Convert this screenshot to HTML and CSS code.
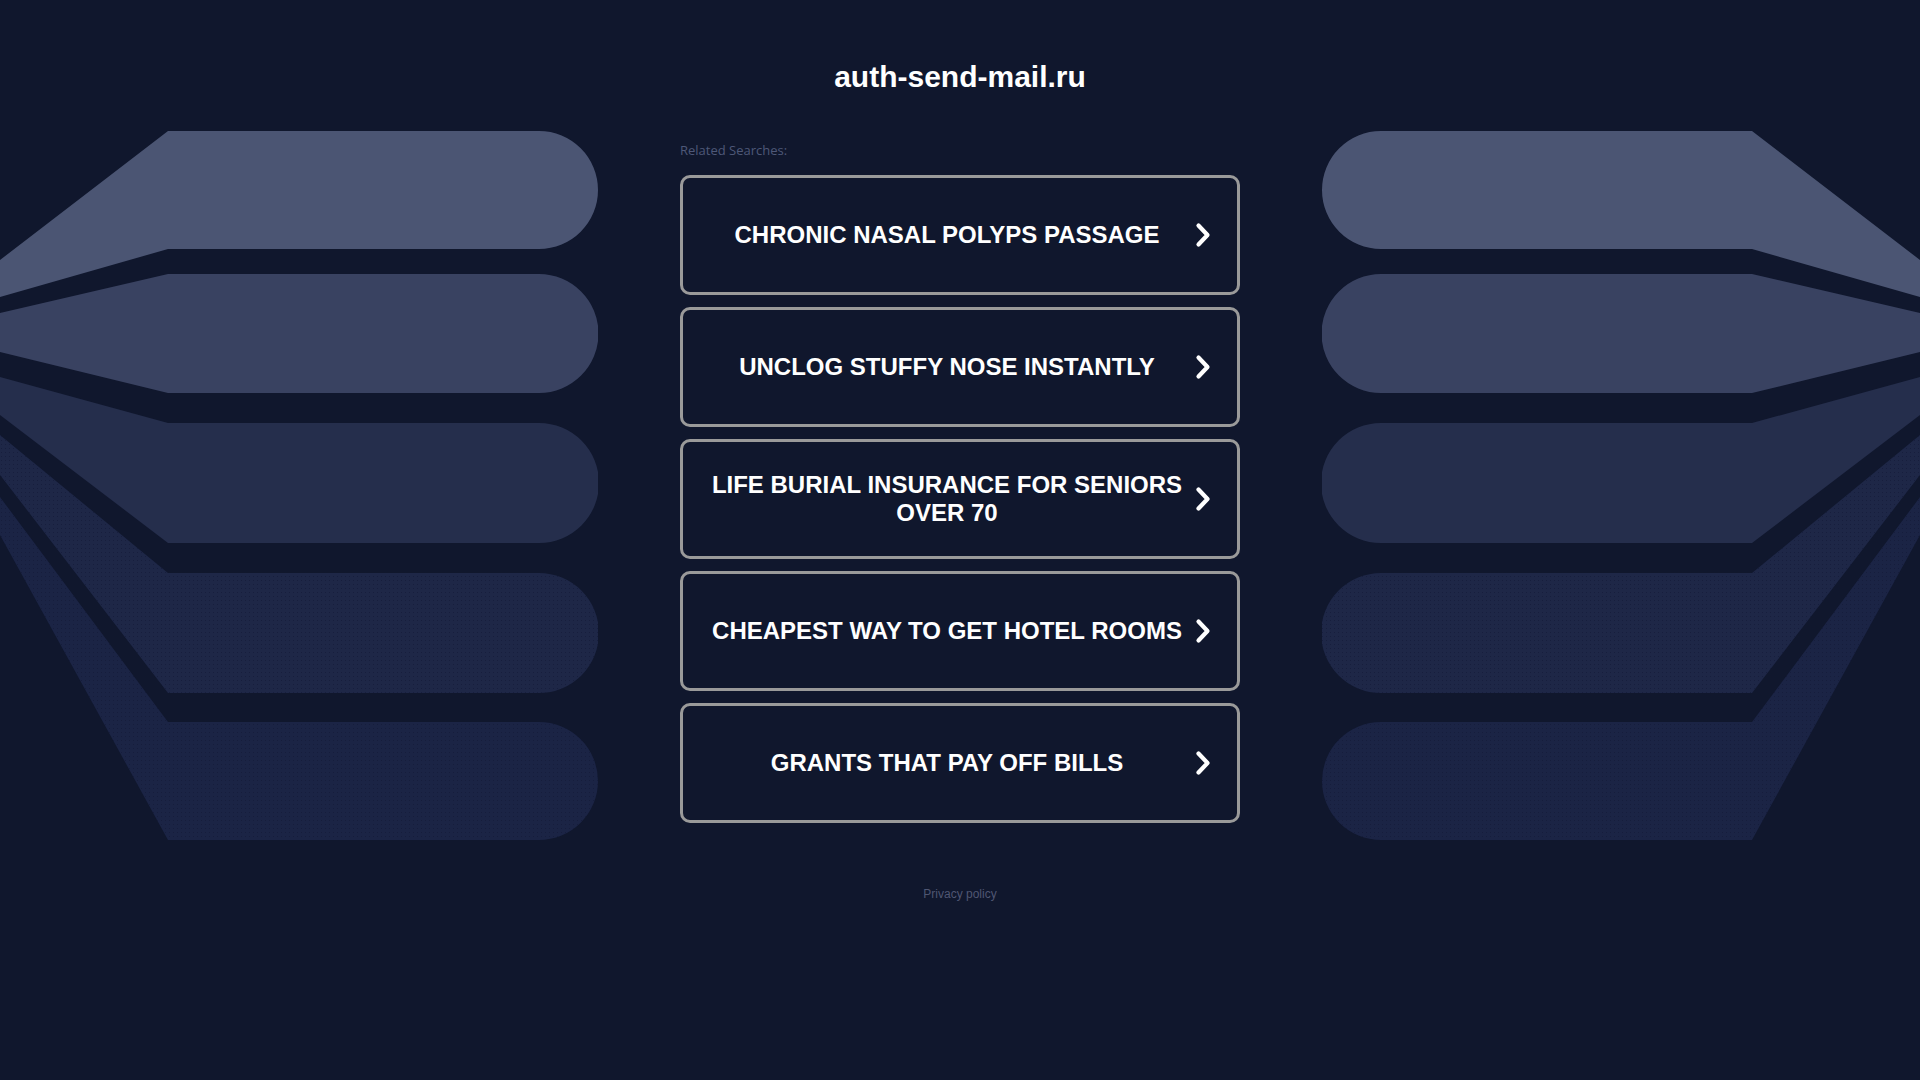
FILE: index.html
```html
<!DOCTYPE html>
<html lang="en">
<head>
<meta charset="utf-8">
<title>auth-send-mail.ru</title>
<link rel="stylesheet" href="styles.css">
</head>
<body>
<header class="header">
  <h1 class="domain">auth-send-mail.ru</h1>
</header>
<main class="stage">
  <svg class="deco" width="598" height="712" viewBox="0 0 598 712" aria-hidden="true">
    <defs>
      <pattern id="dotsL" width="4" height="4" patternUnits="userSpaceOnUse">
        <rect x="1" y="1" width="1" height="1" fill="#0f1530" fill-opacity="0.45"/>
      </pattern>
    </defs>
    <path d="M0,129 L168,0 L539,0 A59,59 0 0 1 539,118 L168,118 L0,166 Z" fill="#4b5573"/>
    <path d="M0,182 L168,143 L539,143 A59.5,59.5 0 0 1 539,262 L168,262 L0,221 Z" fill="#394261"/>
    <path d="M0,246 L168,292 L539,292 A60,60 0 0 1 539,412 L168,412 L0,284 Z" fill="#252e4c"/>
    <path d="M0,304 L168,442 L539,442 A60,60 0 0 1 539,562 L168,562 L0,344 Z" fill="#1e2747"/>
    <path d="M0,304 L168,442 L539,442 A60,60 0 0 1 539,562 L168,562 L0,344 Z" fill="url(#dotsL)"/>
    <path d="M0,366 L168,591 L539,591 A59,59 0 0 1 539,709 L168,709 L0,404 Z" fill="#1b2445"/>
    <path d="M0,366 L168,591 L539,591 A59,59 0 0 1 539,709 L168,709 L0,404 Z" fill="url(#dotsL)"/>
  </svg>

  <section class="center">
    <p class="related">Related Searches:</p>
    <a class="card" href="#"><span class="label">CHRONIC NASAL POLYPS PASSAGE</span><svg class="chev" width="16" height="26" viewBox="0 0 16 26"><polyline points="3.5,3.5 12.5,13 3.5,22.5" fill="none" stroke="#fff" stroke-width="4.2" stroke-linecap="round" stroke-linejoin="round"/></svg></a>
    <a class="card" href="#"><span class="label">UNCLOG STUFFY NOSE INSTANTLY</span><svg class="chev" width="16" height="26" viewBox="0 0 16 26"><polyline points="3.5,3.5 12.5,13 3.5,22.5" fill="none" stroke="#fff" stroke-width="4.2" stroke-linecap="round" stroke-linejoin="round"/></svg></a>
    <a class="card" href="#"><span class="label">LIFE BURIAL INSURANCE FOR SENIORS OVER 70</span><svg class="chev" width="16" height="26" viewBox="0 0 16 26"><polyline points="3.5,3.5 12.5,13 3.5,22.5" fill="none" stroke="#fff" stroke-width="4.2" stroke-linecap="round" stroke-linejoin="round"/></svg></a>
    <a class="card" href="#"><span class="label">CHEAPEST WAY TO GET HOTEL ROOMS</span><svg class="chev" width="16" height="26" viewBox="0 0 16 26"><polyline points="3.5,3.5 12.5,13 3.5,22.5" fill="none" stroke="#fff" stroke-width="4.2" stroke-linecap="round" stroke-linejoin="round"/></svg></a>
    <a class="card" href="#"><span class="label">GRANTS THAT PAY OFF BILLS</span><svg class="chev" width="16" height="26" viewBox="0 0 16 26"><polyline points="3.5,3.5 12.5,13 3.5,22.5" fill="none" stroke="#fff" stroke-width="4.2" stroke-linecap="round" stroke-linejoin="round"/></svg></a>
  </section>

  <svg class="deco mirror" width="598" height="712" viewBox="0 0 598 712" aria-hidden="true">
    <defs>
      <pattern id="dotsR" width="4" height="4" patternUnits="userSpaceOnUse">
        <rect x="1" y="1" width="1" height="1" fill="#0f1530" fill-opacity="0.45"/>
      </pattern>
    </defs>
    <path d="M0,129 L168,0 L539,0 A59,59 0 0 1 539,118 L168,118 L0,166 Z" fill="#4b5573"/>
    <path d="M0,182 L168,143 L539,143 A59.5,59.5 0 0 1 539,262 L168,262 L0,221 Z" fill="#394261"/>
    <path d="M0,246 L168,292 L539,292 A60,60 0 0 1 539,412 L168,412 L0,284 Z" fill="#252e4c"/>
    <path d="M0,304 L168,442 L539,442 A60,60 0 0 1 539,562 L168,562 L0,344 Z" fill="#1e2747"/>
    <path d="M0,304 L168,442 L539,442 A60,60 0 0 1 539,562 L168,562 L0,344 Z" fill="url(#dotsR)"/>
    <path d="M0,366 L168,591 L539,591 A59,59 0 0 1 539,709 L168,709 L0,404 Z" fill="#1b2445"/>
    <path d="M0,366 L168,591 L539,591 A59,59 0 0 1 539,709 L168,709 L0,404 Z" fill="url(#dotsR)"/>
  </svg>
</main>
<footer class="footer">
  <a class="privacy" href="#">Privacy policy</a>
</footer>
</body>
</html>
```

FILE: styles.css
```css
html, body {
  margin: 0;
  padding: 0;
  background: #10172d;
}

body {
  font-family: "Liberation Sans", Arial, sans-serif;
  color: #ffffff;
  min-height: 1080px;
}

.header {
  padding-top: 59px;
  text-align: center;
}

.domain {
  margin: 0;
  font-size: 30px;
  line-height: 36px;
  font-weight: bold;
  color: #ffffff;
}

.stage {
  margin-top: 36px;
  display: flex;
  justify-content: space-between;
  align-items: flex-start;
}

.deco {
  display: block;
  flex: 0 0 598px;
}

.mirror {
  transform: scaleX(-1);
}

.center {
  flex: 0 0 560px;
  padding-top: 11px;
  display: flex;
  flex-direction: column;
}

.related {
  margin: 0 0 17px 0;
  font-family: "Open Sans", "Liberation Sans", sans-serif;
  font-size: 13px;
  line-height: 16px;
  color: #4e5878;
}

.card {
  box-sizing: border-box;
  height: 120px;
  margin-bottom: 12px;
  border: 3px solid #9a9a9a;
  border-radius: 10px;
  padding: 0 26px 0 20px;
  display: flex;
  align-items: center;
  gap: 4px;
  text-decoration: none;
  color: #ffffff;
}

.label {
  flex: 1;
  text-align: center;
  font-size: 24px;
  line-height: 28px;
  font-weight: bold;
}

.chev {
  display: block;
  flex: 0 0 16px;
}

.footer {
  margin-top: 41px;
  text-align: center;
}

.privacy {
  font-size: 12px;
  line-height: 14px;
  color: #4f5672;
  text-decoration: none;
}
```
